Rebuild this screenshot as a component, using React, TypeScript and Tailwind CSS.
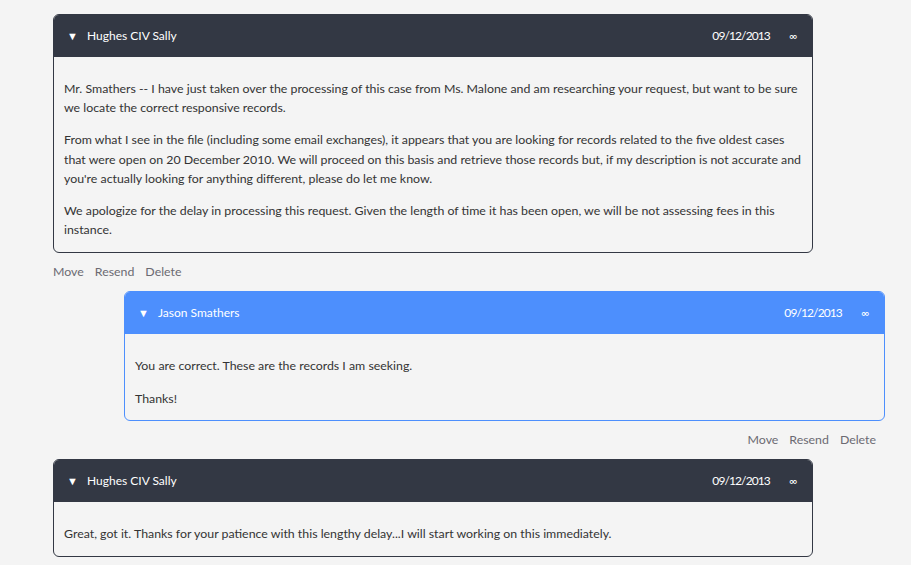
const font = { fontFamily: 'Lato, "Open Sans", sans-serif' };

type Msg = {
  author: string;
  date: string;
  paragraphs: string[];
  mine?: boolean;
};

const messages: Msg[] = [
  {
    author: 'Hughes CIV Sally',
    date: '09/12/2013',
    paragraphs: [
      'Mr. Smathers -- I have just taken over the processing of this case from Ms. Malone and am researching your request, but want to be sure we locate the correct responsive records.',
      "From what I see in the file (including some email exchanges), it appears that you are looking for records related to the five oldest cases that were open on 20 December 2010. We will proceed on this basis and retrieve those records but, if my description is not accurate and you're actually looking for anything different, please do let me know.",
      'We apologize for the delay in processing this request. Given the length of time it has been open, we will be not assessing fees in this instance.',
    ],
  },
  {
    author: 'Jason Smathers',
    date: '09/12/2013',
    mine: true,
    paragraphs: ['You are correct. These are the records I am seeking.', 'Thanks!'],
  },
  {
    author: 'Hughes CIV Sally',
    date: '09/12/2013',
    paragraphs: [
      'Great, got it. Thanks for your patience with this lengthy delay...I will start working on this immediately.',
    ],
  },
];

function Message({ msg, last }: { msg: Msg; last: boolean }) {
  const border = msg.mine ? 'border-[#4d8ffd]' : 'border-[#333844]';
  const head = msg.mine ? 'bg-[#4d8ffd]' : 'bg-[#333844]';
  return (
    <div className={msg.mine ? 'ml-[124px] w-[761px]' : 'ml-[53px] w-[760px]'}>
      <div className={`rounded-[6px] border ${border} bg-[#f4f4f4] overflow-hidden`}>
        <div className={`${head} h-[42px] flex items-center text-white text-[12px] pl-[13px] pr-[15px]`}>
          <span className="text-[11px] w-[20px]">▼</span>
          <span>{msg.author}</span>
          <span className="ml-auto tracking-[-0.9px]">{msg.date}</span>
          <span className="ml-[19px] text-[11px]">∞</span>
        </div>
        <div
          className={`px-[10px] pt-[22px] text-[12.35px] leading-[19.2px] text-[#333] ${
            msg.mine ? 'pb-[12px]' : 'pb-[13px]'
          }`}
        >
          {msg.paragraphs.map((p, i) => (
            <p key={i} className={i > 0 ? 'mt-[13px]' : ''}>
              {p}
            </p>
          ))}
        </div>
      </div>
      {!last && (
        <div
          className={`flex gap-[11px] text-[12.35px] text-[#6b6a72] h-[38px] items-center ${
            msg.mine ? 'justify-end pr-[9px]' : ''
          }`}
        >
          <span>Move</span>
          <span>Resend</span>
          <span>Delete</span>
        </div>
      )}
    </div>
  );
}

export default function App() {
  return (
    <div className="min-h-[565px] bg-[#f4f4f4] pt-[14px]" style={font}>
      {messages.map((m, i) => (
        <Message key={i} msg={m} last={i === messages.length - 1} />
      ))}
    </div>
  );
}
